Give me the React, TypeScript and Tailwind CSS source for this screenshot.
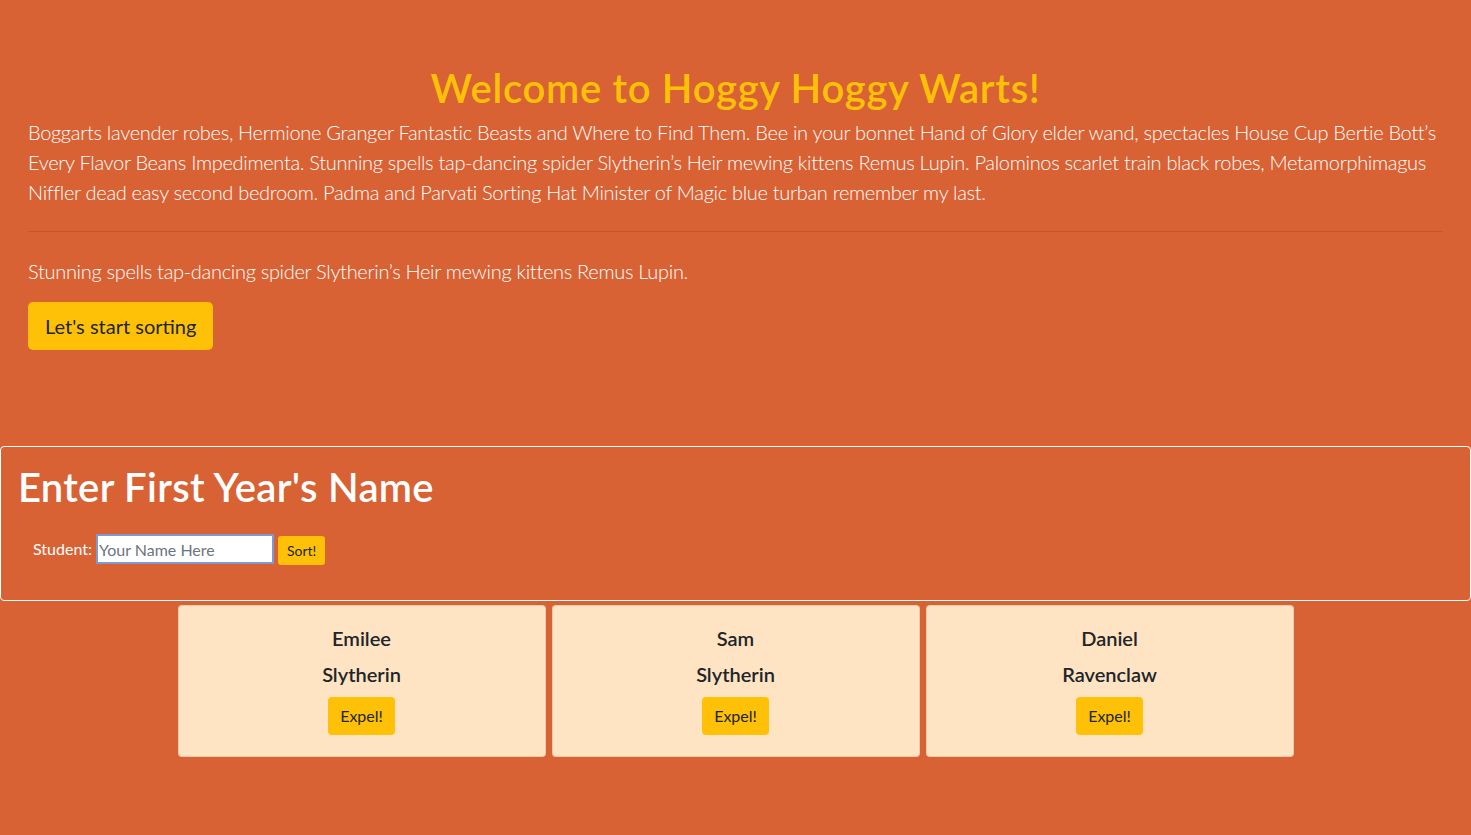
export default function App() {
  const students = [
    { name: "Emilee", house: "Slytherin" },
    { name: "Sam", house: "Slytherin" },
    { name: "Daniel", house: "Ravenclaw" },
  ];

  return (
    <div className="min-h-[835px] bg-[#d86234] font-['Lato',sans-serif] text-[#212529]">
      {/* jumbotron */}
      <div className="px-[28px] pt-16 pb-16 mb-8">
        <h1 className="text-center text-[40px] leading-[48px] font-semibold tracking-[0.7px] text-[#ffc107] mb-[5px]">
          Welcome to Hoggy Hoggy Warts!
        </h1>
        <p className="text-[20px] leading-[30px] font-light tracking-[-0.3px] text-white">
          Boggarts lavender robes, Hermione Granger Fantastic Beasts and Where to Find Them. Bee in your bonnet Hand of
          Glory elder wand, spectacles House Cup Bertie Bott’s Every Flavor Beans Impedimenta. Stunning spells
          tap-dancing spider Slytherin’s Heir mewing kittens Remus Lupin. Palominos scarlet train black robes,
          Metamorphimagus Niffler dead easy second bedroom. Padma and Parvati Sorting Hat Minister of Magic blue turban
          remember my last.
        </p>
        <hr className="my-6 border-t border-black/10" />
        <p className="text-[20px] leading-[30px] font-light tracking-[-0.3px] text-white mb-4">
          Stunning spells tap-dancing spider Slytherin’s Heir mewing kittens Remus Lupin.
        </p>
        <button className="bg-[#ffc107] text-[#212529] text-[20px] leading-[30px] px-[17px] py-[9px] rounded-[5px]">
          Let's start sorting
        </button>
      </div>

      {/* sorting form */}
      <div className="border border-white rounded-[4px] px-[17px] pt-4 pb-[35px]">
        <h1 className="text-[40px] leading-[48px] font-semibold tracking-[0.3px] text-white mb-[22px]">
          Enter First Year's Name
        </h1>
        <div className="flex items-center pl-[15px]">
          <label className="text-[16px] text-white mr-[4px]">Student:</label>
          <input
            className="w-[178px] h-[30px] bg-white border-2 border-[#7b9bd1] px-[1px] text-[16px] text-[#495057] placeholder:text-[#6c757d] outline-none"
            placeholder="Your Name Here"
          />
          <button className="ml-[4px] mt-[3px] bg-[#ffc107] text-[#212529] text-[14px] leading-[19px] px-[9px] py-[5px] rounded-[3px]">
            Sort!
          </button>
        </div>
      </div>

      {/* student cards */}
      <div className="flex justify-center gap-[6px] mt-[4px]">
        {students.map((s) => (
          <div
            key={s.name}
            className="w-[368px] bg-[#ffe4c4] border border-black/10 rounded-[4px] px-5 pt-5 pb-[21px] flex flex-col items-center"
          >
            <h5 className="text-[20px] leading-[24px] font-semibold mb-3">{s.name}</h5>
            <h5 className="text-[20px] leading-[24px] font-semibold mb-[11px]">{s.house}</h5>
            <button className="bg-[#ffc107] text-[#212529] text-[16px] leading-[24px] px-3 py-[7px] rounded-[4px]">
              Expel!
            </button>
          </div>
        ))}
      </div>
    </div>
  );
}
